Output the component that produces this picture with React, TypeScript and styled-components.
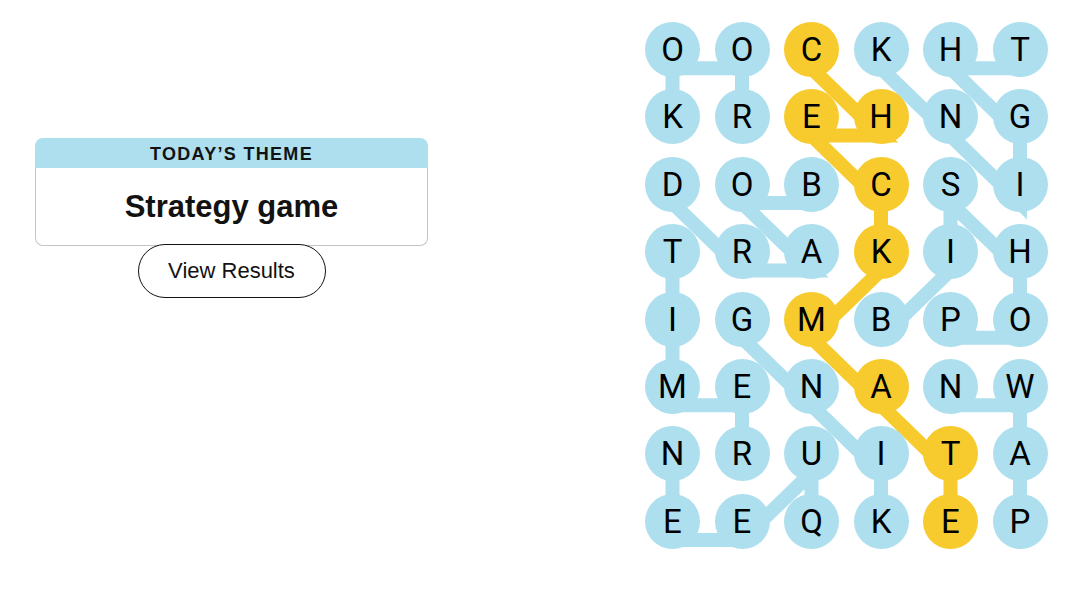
import React from 'react'
import styled, { createGlobalStyle } from 'styled-components'

const GlobalStyle = createGlobalStyle`
  html, body {
    margin: 0;
    padding: 0;
    background: #ffffff;
  }
  body {
    font-family: "Liberation Sans", Arial, sans-serif;
    color: #121212;
  }
`

const BLUE = '#aedfee'
const YELLOW = '#f7cb2d'
const CELL = 55
const COL_STEP = 69.5
const ROW_STEP = 67.4
const LINE_SHIFT = 18.7

const board = [
  'OOCKHT',
  'KREHNG',
  'DOBCSI',
  'TRAKIH',
  'IGMBPO',
  'MENANW',
  'NRUITA',
  'EEQKEP',
]

type Cell = [number, number]
type Word = { cells: Cell[]; spangram?: boolean }

// rook, knight, board, bishop, timer, queen, king, pawn, checkmate
const words: Word[] = [
  { cells: [[1, 1], [0, 1], [0, 0], [1, 0]] },
  { cells: [[0, 3], [1, 4], [2, 5], [1, 5], [0, 4], [0, 5]] },
  { cells: [[2, 2], [2, 1], [3, 2], [3, 1], [2, 0]] },
  { cells: [[4, 3], [3, 4], [2, 4], [3, 5], [4, 5], [4, 4]] },
  { cells: [[3, 0], [4, 0], [5, 0], [5, 1], [6, 1]] },
  { cells: [[7, 2], [6, 2], [7, 1], [7, 0], [6, 0]] },
  { cells: [[7, 3], [6, 3], [5, 2], [4, 1]] },
  { cells: [[7, 5], [6, 5], [5, 5], [5, 4]] },
  { cells: [[0, 2], [1, 3], [1, 2], [2, 3], [3, 3], [4, 2], [5, 3], [6, 4], [7, 4]], spangram: true },
]

const spanSet = new Set(words.filter(w => w.spangram).flatMap(w => w.cells.map(c => c.join(','))))

const Page = styled.div`
  display: flex;
  align-items: flex-start;
`

const ThemeSide = styled.div`
  display: flex;
  flex-direction: column;
  align-items: center;
  width: 393px;
  margin: 138px 0 0 35px;
`

const ThemeCard = styled.div`
  width: 100%;
  display: flex;
  flex-direction: column;
`

const ThemeHeader = styled.div`
  height: 30px;
  box-sizing: border-box;
  padding-top: 3px;
  display: flex;
  align-items: center;
  justify-content: center;
  background: ${BLUE};
  border-radius: 8px 8px 0 0;
  font-size: 18px;
  font-weight: 700;
  letter-spacing: 1.3px;
  color: #121212;
`

const ThemeBody = styled.div`
  height: 77px;
  display: flex;
  align-items: center;
  justify-content: center;
  border: 1px solid #c4c4c4;
  border-top: none;
  border-radius: 0 0 8px 8px;
  font-size: 31px;
  font-weight: 700;
  color: #121212;
`

const ResultsButton = styled.button`
  position: relative;
  z-index: 1;
  margin-top: -2px;
  width: 188px;
  height: 54px;
  border: 1px solid #121212;
  border-radius: 27px;
  background: #ffffff;
  font-family: "Liberation Sans", Arial, sans-serif;
  font-size: 22px;
  color: #121212;
  cursor: pointer;
`

const BoardWrap = styled.div`
  position: relative;
  margin: 22px 0 0 217px;
`

const Lines = styled.svg`
  position: absolute;
  left: 0;
  top: 0;
  overflow: visible;
  z-index: 0;
`

const Grid = styled.div`
  position: relative;
  z-index: 1;
  display: grid;
  grid-template-columns: repeat(6, ${CELL}px);
  grid-auto-rows: ${CELL}px;
  column-gap: ${COL_STEP - CELL}px;
  row-gap: ${ROW_STEP - CELL}px;
`

const Letter = styled.div<{ $span: boolean }>`
  width: ${CELL}px;
  height: ${CELL}px;
  border-radius: 50%;
  background: ${({ $span }) => ($span ? YELLOW : BLUE)};
  display: flex;
  align-items: center;
  justify-content: center;
  font-family: Roboto, "Liberation Sans", sans-serif;
  font-size: 33px;
  line-height: 1;
  color: #000000;
`

const point = ([r, c]: Cell) =>
  `${c * COL_STEP + CELL / 2},${r * ROW_STEP + CELL / 2 + LINE_SHIFT}`

export default function App() {
  return (
    <Page>
      <GlobalStyle />
      <ThemeSide>
        <ThemeCard>
          <ThemeHeader>TODAY’S THEME</ThemeHeader>
          <ThemeBody>Strategy game</ThemeBody>
        </ThemeCard>
        <ResultsButton>View Results</ResultsButton>
      </ThemeSide>

      <BoardWrap>
        <Lines width={6 * COL_STEP} height={8 * ROW_STEP}>
          {words.map((w, i) => (
            <polyline
              key={i}
              points={w.cells.map(point).join(' ')}
              fill="none"
              stroke={w.spangram ? YELLOW : BLUE}
              strokeWidth={14}
              strokeLinejoin="miter"
              strokeLinecap="butt"
            />
          ))}
        </Lines>
        <Grid>
          {board.map((row, r) =>
            row.split('').map((ch, c) => (
              <Letter key={`${r}-${c}`} $span={spanSet.has(`${r},${c}`)}>
                {ch}
              </Letter>
            ))
          )}
        </Grid>
      </BoardWrap>
    </Page>
  )
}
